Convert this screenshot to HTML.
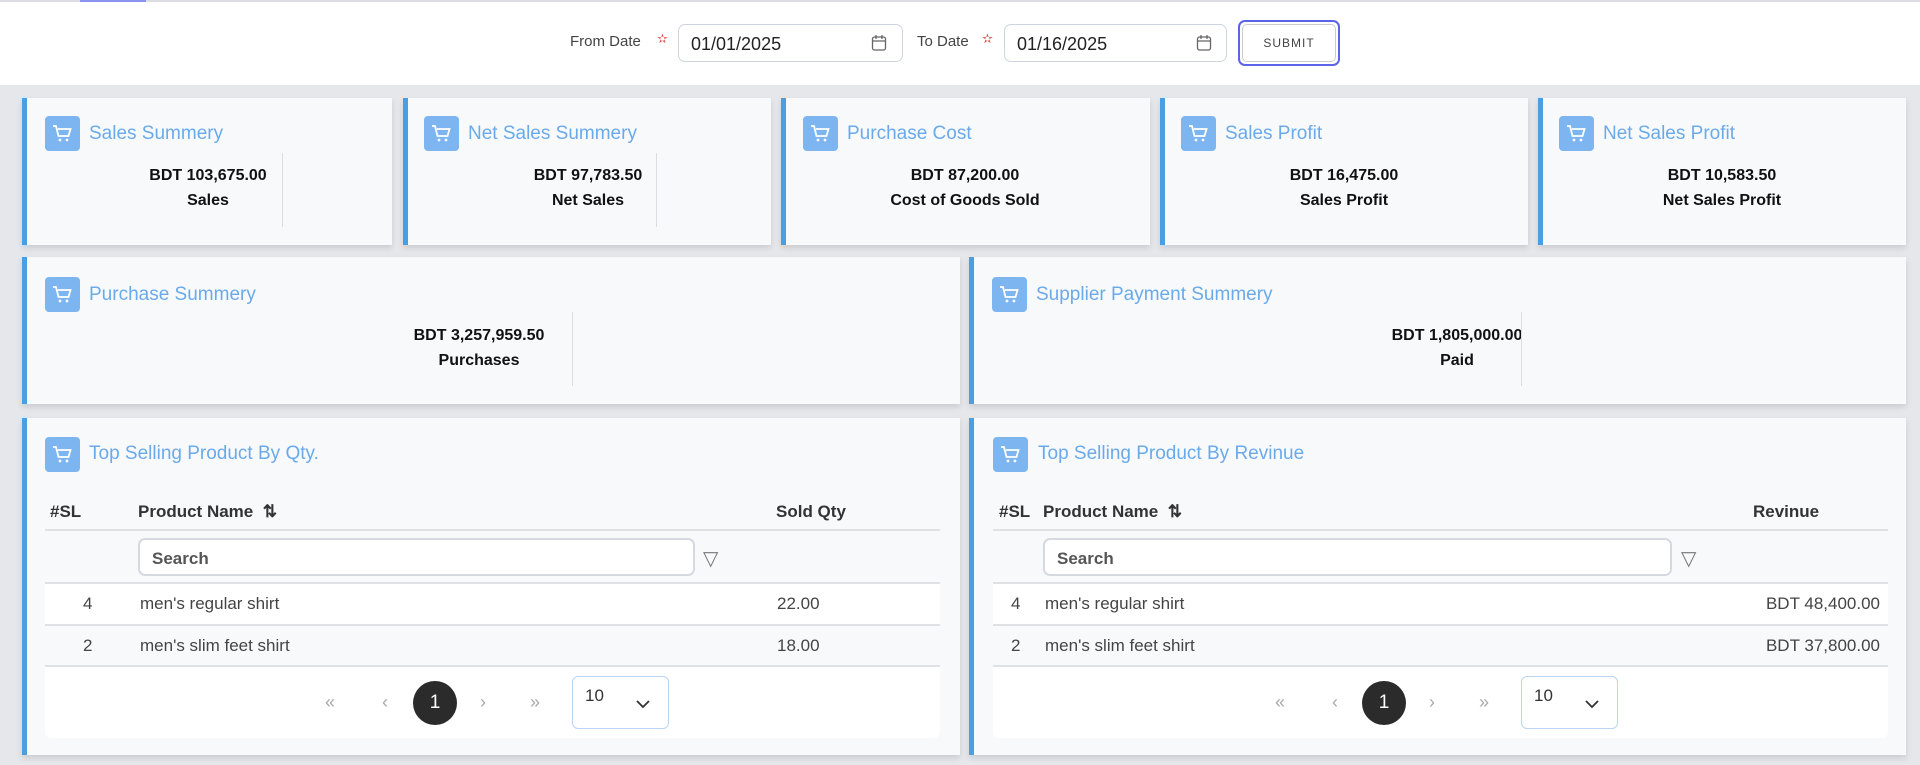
<!DOCTYPE html>
<html><head><meta charset="utf-8"><style>
*{box-sizing:border-box;margin:0;padding:0}
body{width:1920px;height:765px;overflow:hidden;background:#e5e7eb;font-family:"Liberation Sans",sans-serif;position:relative;color:#111}
.a{position:absolute}
.hdr{left:0;top:0;width:1920px;height:85px;background:#fff;border-top:2px solid #dcdde2}
.lbl{font-size:15px;color:#444}
.star{color:#e05252;font-size:13px}
.inp{border:1px solid #cfd4de;border-radius:7px;background:#fff;font-size:18px;color:#222;padding:9px 12px}
.card{background:#f8f9fb;border-left:5px solid #4a9fe3;box-shadow:0 3px 6px rgba(0,0,0,.12)}
.ic{width:35px;height:35px;background:#7db5f0;border-radius:4px}
.tt{font-size:19px;color:#6aaaea}
.v{font-size:16px;font-weight:bold;text-align:center;color:#111}
.dv{width:1px;background:#dcdde2}
.th{font-size:17px;font-weight:bold;color:#333}
.td{font-size:17px;color:#444}
.ln{height:2px;background:#dfe1e5}
</style></head><body>
<div class="a hdr"></div>
<div class="a" style="left:80px;top:0;width:66px;height:2px;background:#8b93f0"></div>
<div class="a lbl" style="left:570px;top:33px">From Date</div>
<div class="a star" style="left:657px;top:31px">✫</div>
<div class="a inp" style="left:678px;top:24px;width:225px;height:38px">01/01/2025</div>
<div class="a lbl" style="left:917px;top:33px">To Date</div>
<div class="a star" style="left:982px;top:31px">✫</div>
<div class="a inp" style="left:1004px;top:24px;width:223px;height:38px">01/16/2025</div>
<svg class="a" style="left:871px;top:34px" width="16" height="18" viewBox="0 0 16 18"><rect x="1.5" y="3" width="13" height="13" rx="2" fill="none" stroke="#666" stroke-width="1.3"/><path d="M1.5 7h13M5 1v4M11 1v4" stroke="#666" stroke-width="1.3"/></svg>
<svg class="a" style="left:1196px;top:34px" width="16" height="18" viewBox="0 0 16 18"><rect x="1.5" y="3" width="13" height="13" rx="2" fill="none" stroke="#666" stroke-width="1.3"/><path d="M1.5 7h13M5 1v4M11 1v4" stroke="#666" stroke-width="1.3"/></svg>
<div class="a" style="left:1238px;top:20px;width:102px;height:46px;border:2px solid #5b63e8;border-radius:7px;padding:2px"><div style="border:1px solid #ccc;border-radius:5px;height:38px;font-size:12px;letter-spacing:1px;color:#444;text-align:center;line-height:36px;background:#fff">SUBMIT</div></div>

<!-- row1 -->
<div class="a card" style="left:22px;top:98px;width:370px;height:147px"></div>
<div class="a card" style="left:403px;top:98px;width:368px;height:147px"></div>
<div class="a card" style="left:781px;top:98px;width:369px;height:147px"></div>
<div class="a card" style="left:1160px;top:98px;width:368px;height:147px"></div>
<div class="a card" style="left:1538px;top:98px;width:368px;height:147px"></div>

<div class="a ic" style="left:45px;top:116px"></div><div class="a tt" style="left:89px;top:123px">Sales Summery</div>
<div class="a ic" style="left:424px;top:116px"></div><div class="a tt" style="left:468px;top:123px">Net Sales Summery</div>
<div class="a ic" style="left:803px;top:116px"></div><div class="a tt" style="left:847px;top:123px">Purchase Cost</div>
<div class="a ic" style="left:1181px;top:116px"></div><div class="a tt" style="left:1225px;top:123px">Sales Profit</div>
<div class="a ic" style="left:1559px;top:116px"></div><div class="a tt" style="left:1603px;top:123px">Net Sales Profit</div>

<div class="a v" style="left:108px;top:167px;width:200px">BDT 103,675.00<br><span style="line-height:32px">Sales</span></div>
<div class="a dv" style="left:282px;top:153px;height:74px"></div>
<div class="a v" style="left:488px;top:167px;width:200px">BDT 97,783.50<br><span style="line-height:32px">Net Sales</span></div>
<div class="a dv" style="left:656px;top:153px;height:74px"></div>
<div class="a v" style="left:865px;top:167px;width:200px">BDT 87,200.00<br><span style="line-height:32px">Cost of Goods Sold</span></div>
<div class="a v" style="left:1244px;top:167px;width:200px">BDT 16,475.00<br><span style="line-height:32px">Sales Profit</span></div>
<div class="a v" style="left:1622px;top:167px;width:200px">BDT 10,583.50<br><span style="line-height:32px">Net Sales Profit</span></div>

<!-- row2 -->
<div class="a card" style="left:22px;top:257px;width:938px;height:147px"></div>
<div class="a card" style="left:969px;top:257px;width:937px;height:147px"></div>
<div class="a ic" style="left:45px;top:277px"></div><div class="a tt" style="left:89px;top:284px">Purchase Summery</div>
<div class="a ic" style="left:992px;top:277px"></div><div class="a tt" style="left:1036px;top:284px">Supplier Payment Summery</div>
<div class="a v" style="left:379px;top:327px;width:200px">BDT 3,257,959.50<br><span style="line-height:32px">Purchases</span></div>
<div class="a dv" style="left:572px;top:312px;height:74px"></div>
<div class="a v" style="left:1357px;top:327px;width:200px">BDT 1,805,000.00<br><span style="line-height:32px">Paid</span></div>
<div class="a dv" style="left:1521px;top:312px;height:74px"></div>

<!-- row3 -->
<div class="a card" style="left:22px;top:418px;width:938px;height:337px"></div>
<div class="a card" style="left:969px;top:418px;width:937px;height:337px"></div>
<div class="a ic" style="left:45px;top:437px"></div><div class="a tt" style="left:89px;top:443px">Top Selling Product By Qty.</div>
<div class="a ic" style="left:993px;top:437px"></div><div class="a tt" style="left:1038px;top:443px">Top Selling Product By Revinue</div>

<!-- left table -->
<div class="a th" style="left:50px;top:502px">#SL</div>
<div class="a th" style="left:138px;top:502px">Product Name &nbsp;⇅</div>
<div class="a th" style="left:776px;top:502px">Sold Qty</div>
<div class="a ln" style="left:45px;top:529px;width:895px"></div>
<div class="a inp" style="left:138px;top:538px;width:557px;height:38px;font-size:17px;font-weight:bold;color:#555;border-width:2px;border-color:#d6d9e0">Search</div>
<div class="a" style="left:703px;top:546px;font-size:20px;color:#777">▽</div>
<div class="a ln" style="left:45px;top:582px;width:895px"></div>
<div class="a" style="left:45px;top:584px;width:895px;height:40px;background:#fff"></div>
<div class="a td" style="left:83px;top:594px">4</div><div class="a td" style="left:140px;top:594px">men's regular shirt</div><div class="a td" style="left:777px;top:594px">22.00</div>
<div class="a ln" style="left:45px;top:624px;width:895px"></div>
<div class="a td" style="left:83px;top:636px">2</div><div class="a td" style="left:140px;top:636px">men's slim feet shirt</div><div class="a td" style="left:777px;top:636px">18.00</div>
<div class="a ln" style="left:45px;top:665px;width:895px"></div>
<div class="a" style="left:45px;top:667px;width:895px;height:71px;background:#fff;border-radius:0 0 6px 6px"></div>
<div class="a" style="left:325px;top:692px;color:#aaa;font-size:18px">«</div>
<div class="a" style="left:382px;top:692px;color:#aaa;font-size:18px">‹</div>
<div class="a" style="left:413px;top:681px;width:44px;height:44px;border-radius:50%;background:#2b2b2b;color:#fff;font-size:19px;text-align:center;line-height:44px">1</div>
<div class="a" style="left:480px;top:692px;color:#aaa;font-size:18px">›</div>
<div class="a" style="left:530px;top:692px;color:#aaa;font-size:18px">»</div>
<div class="a" style="left:572px;top:676px;width:97px;height:53px;border:1px solid #b9d5f3;border-radius:6px;background:#fff"><span style="position:absolute;left:12px;top:9px;font-size:17px;color:#333">10</span><svg style="position:absolute;left:62px;top:22px" width="16" height="10"><path d="M2 2l6 6 6-6" stroke="#333" stroke-width="1.8" fill="none"/></svg></div>

<!-- right table -->
<div class="a th" style="left:999px;top:502px">#SL</div>
<div class="a th" style="left:1043px;top:502px">Product Name &nbsp;⇅</div>
<div class="a th" style="left:1753px;top:502px">Revinue</div>
<div class="a ln" style="left:993px;top:529px;width:895px"></div>
<div class="a inp" style="left:1043px;top:538px;width:629px;height:38px;font-size:17px;font-weight:bold;color:#555;border-width:2px;border-color:#d6d9e0">Search</div>
<div class="a" style="left:1681px;top:546px;font-size:20px;color:#777">▽</div>
<div class="a ln" style="left:993px;top:582px;width:895px"></div>
<div class="a" style="left:993px;top:584px;width:895px;height:40px;background:#fff"></div>
<div class="a td" style="left:1011px;top:594px">4</div><div class="a td" style="left:1045px;top:594px">men's regular shirt</div><div class="a td" style="left:1680px;top:594px;width:200px;text-align:right">BDT 48,400.00</div>
<div class="a ln" style="left:993px;top:624px;width:895px"></div>
<div class="a td" style="left:1011px;top:636px">2</div><div class="a td" style="left:1045px;top:636px">men's slim feet shirt</div><div class="a td" style="left:1680px;top:636px;width:200px;text-align:right">BDT 37,800.00</div>
<div class="a ln" style="left:993px;top:665px;width:895px"></div>
<div class="a" style="left:993px;top:667px;width:895px;height:71px;background:#fff;border-radius:0 0 6px 6px"></div>
<div class="a" style="left:1275px;top:692px;color:#aaa;font-size:18px">«</div>
<div class="a" style="left:1332px;top:692px;color:#aaa;font-size:18px">‹</div>
<div class="a" style="left:1362px;top:681px;width:44px;height:44px;border-radius:50%;background:#2b2b2b;color:#fff;font-size:19px;text-align:center;line-height:44px">1</div>
<div class="a" style="left:1429px;top:692px;color:#aaa;font-size:18px">›</div>
<div class="a" style="left:1479px;top:692px;color:#aaa;font-size:18px">»</div>
<div class="a" style="left:1521px;top:676px;width:97px;height:53px;border:1px solid #b9d5f3;border-radius:6px;background:#fff"><span style="position:absolute;left:12px;top:9px;font-size:17px;color:#333">10</span><svg style="position:absolute;left:62px;top:22px" width="16" height="10"><path d="M2 2l6 6 6-6" stroke="#333" stroke-width="1.8" fill="none"/></svg></div>

<!-- cart icons -->
<svg width="0" height="0" style="position:absolute"><defs><g id="cart"><path d="M3 5h3l2.5 10h10l2-7H8" fill="none" stroke="#fff" stroke-width="1.8"/><circle cx="10" cy="19" r="1.4" fill="#fff"/><circle cx="17" cy="19" r="1.4" fill="#fff"/></g></defs></svg>
<svg class="a" style="left:50px;top:121px" width="25" height="25" viewBox="0 0 25 25"><use href="#cart"/></svg>
<svg class="a" style="left:429px;top:121px" width="25" height="25" viewBox="0 0 25 25"><use href="#cart"/></svg>
<svg class="a" style="left:808px;top:121px" width="25" height="25" viewBox="0 0 25 25"><use href="#cart"/></svg>
<svg class="a" style="left:1186px;top:121px" width="25" height="25" viewBox="0 0 25 25"><use href="#cart"/></svg>
<svg class="a" style="left:1564px;top:121px" width="25" height="25" viewBox="0 0 25 25"><use href="#cart"/></svg>
<svg class="a" style="left:50px;top:282px" width="25" height="25" viewBox="0 0 25 25"><use href="#cart"/></svg>
<svg class="a" style="left:997px;top:282px" width="25" height="25" viewBox="0 0 25 25"><use href="#cart"/></svg>
<svg class="a" style="left:50px;top:442px" width="25" height="25" viewBox="0 0 25 25"><use href="#cart"/></svg>
<svg class="a" style="left:998px;top:442px" width="25" height="25" viewBox="0 0 25 25"><use href="#cart"/></svg>
</body></html>
